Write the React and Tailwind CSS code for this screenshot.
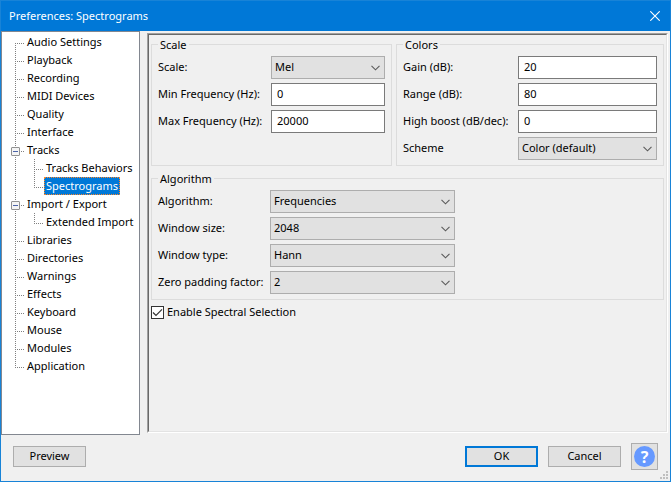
import { useState } from "react";

const treeItems = [
  { name: "Audio Settings" },
  { name: "Playback" },
  { name: "Recording" },
  { name: "MIDI Devices" },
  { name: "Quality" },
  { name: "Interface" },
  { name: "Tracks", expandable: true },
  { name: "Tracks Behaviors", child: true, hasNext: true },
  { name: "Spectrograms", child: true },
  { name: "Import / Export", expandable: true },
  { name: "Extended Import", child: true },
  { name: "Libraries" },
  { name: "Directories" },
  { name: "Warnings" },
  { name: "Effects" },
  { name: "Keyboard" },
  { name: "Mouse" },
  { name: "Modules" },
  { name: "Application" },
];

function DottedLine({ d }) {
  return <path d={d} stroke="#808080" strokeWidth="1" strokeDasharray="1 1" fill="none" />;
}

function Connector({ item, first, last }) {
  const trunk = `M13.5 ${first ? 10 : 0}V${last ? 11 : 18}`;
  return (
    <svg
      width={item.child ? 42 : 23}
      height="18"
      className="block shrink-0"
      shapeRendering="crispEdges"
      aria-hidden="true"
    >
      <DottedLine d={trunk} />
      {item.child ? (
        <>
          <DottedLine d={`M32.5 0V${item.hasNext ? 18 : 11}`} />
          <DottedLine d="M32 10.5H41" />
        </>
      ) : (
        <DottedLine d="M13 10.5H22" />
      )}
    </svg>
  );
}

function TreeRow({ item, first, last, selected, onSelect }) {
  return (
    <li className="relative flex h-[18px]">
      <Connector item={item} first={first} last={last} />
      {item.expandable && (
        <button
          type="button"
          aria-label={`Collapse ${item.name}`}
          className="absolute top-1.5 left-[9px] flex size-[9px] items-center justify-center rounded-[1px] border border-[#919191] bg-[#f4f4f4]"
        >
          <span className="h-px w-[5px] bg-[#4b63a7]" />
        </button>
      )}
      <button
        type="button"
        onClick={onSelect}
        className={
          selected
            ? "border border-dotted border-[#ff8728] bg-black bg-linear-to-r from-[#0078d7] to-[#0078d7] bg-origin-padding bg-clip-border px-px leading-4 whitespace-nowrap text-white"
            : "border border-transparent px-px leading-4 whitespace-nowrap"
        }
      >
        {item.name}
      </button>
    </li>
  );
}

function Group({ title, columns, children }) {
  return (
    <fieldset className="min-w-0 border border-[#dcdcdc] px-1.5 pb-[5px]">
      <legend className="px-0.5 leading-[17px]">{title}</legend>
      <div className={`grid items-center gap-y-1 pt-[3px] ${columns}`}>{children}</div>
    </fieldset>
  );
}

function TextField({ id, label, value }) {
  return (
    <>
      <label htmlFor={id} className="whitespace-nowrap">{label}</label>
      <input
        id={id}
        type="text"
        defaultValue={value}
        className="h-[23px] w-full min-w-0 border border-[#7a7a7a] bg-white px-[5px] pb-0.5 outline-none"
      />
    </>
  );
}

function SelectField({ id, label, value }) {
  return (
    <>
      <label htmlFor={id} className="whitespace-nowrap">{label}</label>
      <div className="grid items-center">
        <select
          id={id}
          className="col-start-1 row-start-1 h-[23px] w-full appearance-none border border-[#adadad] bg-[#e1e1e1] px-[3px] outline-none"
        >
          <option>{value}</option>
        </select>
        <svg
          width="9"
          height="6"
          viewBox="0 0 9 6"
          className="pointer-events-none col-start-1 row-start-1 mr-[5px] justify-self-end"
          aria-hidden="true"
        >
          <path d="M0.5 0.8L4.5 4.8L8.5 0.8" fill="none" stroke="#5a5a5a" strokeWidth="1.1" />
        </svg>
      </div>
    </>
  );
}

export default function App() {
  const [selected, setSelected] = useState("Spectrograms");
  const [spectral, setSpectral] = useState(true);

  return (
    <div className="relative flex min-h-screen flex-col border border-[#1883d7] bg-[#f0f0f0] font-['Noto_Sans','Open_Sans',sans-serif] text-[11px] text-black">
      <header className="flex h-[30px] items-center justify-between bg-[#0078d7] pr-2.5 pl-2 text-white">
        <h1>Preferences: Spectrograms</h1>
        <button type="button" aria-label="Close">
          <svg width="10" height="10" viewBox="0 0 10 10" className="block" aria-hidden="true">
            <path d="M0.3 0.3L9.7 9.7M9.7 0.3L0.3 9.7" stroke="white" strokeWidth="1.1" />
          </svg>
        </button>
      </header>

      <main className="flex flex-1 gap-[7px] pr-0.5">
        <nav className="w-[139px] shrink-0 border border-[#828790] bg-white pt-px" aria-label="Categories">
          <ul>
            {treeItems.map((item, i) => (
              <TreeRow
                key={item.name}
                item={item}
                first={i === 0}
                last={i === treeItems.length - 1}
                selected={item.name === selected}
                onSelect={() => setSelected(item.name)}
              />
            ))}
          </ul>
        </nav>

        <div className="my-0.5 flex min-w-0 flex-1 border border-t-[#a0a0a0] border-r-white border-b-white border-l-[#a0a0a0]">
          <section className="flex min-w-0 flex-1 flex-col gap-1 border border-t-[#696969] border-r-[#e3e3e3] border-b-[#e3e3e3] border-l-[#696969] px-0.5 pt-px">
            <div className="grid grid-cols-[241fr_268fr] gap-1">
              <Group title="Scale" columns="grid-cols-[113px_1fr]">
                <SelectField id="scale" label="Scale:" value="Mel" />
                <TextField id="min-frequency" label="Min Frequency (Hz):" value="0" />
                <TextField id="max-frequency" label="Max Frequency (Hz):" value="20000" />
              </Group>
              <Group title="Colors" columns="grid-cols-[115px_1fr]">
                <TextField id="gain" label="Gain (dB):" value="20" />
                <TextField id="range" label="Range (dB):" value="80" />
                <TextField id="high-boost" label="High boost (dB/dec):" value="0" />
                <SelectField id="scheme" label="Scheme" value="Color (default)" />
              </Group>
            </div>

            <Group title="Algorithm" columns="grid-cols-[112px_185px]">
              <SelectField id="algorithm" label="Algorithm:" value="Frequencies" />
              <SelectField id="window-size" label="Window size:" value="2048" />
              <SelectField id="window-type" label="Window type:" value="Hann" />
              <SelectField id="zero-padding" label="Zero padding factor:" value="2" />
            </Group>

            <label className="flex h-[17px] items-center gap-[3px]">
              <span className="grid place-items-center">
                <input
                  type="checkbox"
                  checked={spectral}
                  onChange={(e) => setSpectral(e.target.checked)}
                  className="col-start-1 row-start-1 size-[13px] appearance-none border border-[#333333] bg-white"
                />
                {spectral && (
                  <svg
                    width="11"
                    height="11"
                    viewBox="0 0 11 11"
                    className="pointer-events-none col-start-1 row-start-1"
                    aria-hidden="true"
                  >
                    <path d="M1 5.5L4 8.5L10 2.3" fill="none" stroke="#333333" strokeWidth="1.2" />
                  </svg>
                )}
              </span>
              Enable Spectral Selection
            </label>
          </section>
        </div>
      </main>

      <footer className="flex items-center gap-2.5 px-3 pt-2 pb-[11px]">
        <button type="button" className="mr-auto h-[21px] w-[73px] border border-[#adadad] bg-[#e1e1e1]">
          Preview
        </button>
        <button type="button" className="h-[21px] w-[73px] border-2 border-[#0078d7] bg-[#e1e1e1]">
          OK
        </button>
        <button type="button" className="h-[21px] w-[73px] border border-[#adadad] bg-[#e1e1e1]">
          Cancel
        </button>
        <button
          type="button"
          aria-label="Help"
          className="flex size-[27px] items-center justify-center border border-[#adadad] bg-[#e1e1e1]"
        >
          <span className="flex size-[21px] items-center justify-center rounded-full bg-[#6699ff] text-base leading-none font-bold text-white">
            ?
          </span>
        </button>
      </footer>

      <svg
        width="8"
        height="8"
        viewBox="0 0 8 8"
        className="absolute right-0.5 bottom-0.5"
        fill="#bfbfbf"
        shapeRendering="crispEdges"
        aria-hidden="true"
      >
        <path d="M6 0h2v2H6zM3 3h2v2H3zM6 3h2v2H6zM0 6h2v2H0zM3 6h2v2H3zM6 6h2v2H6z" />
      </svg>
    </div>
  );
}
